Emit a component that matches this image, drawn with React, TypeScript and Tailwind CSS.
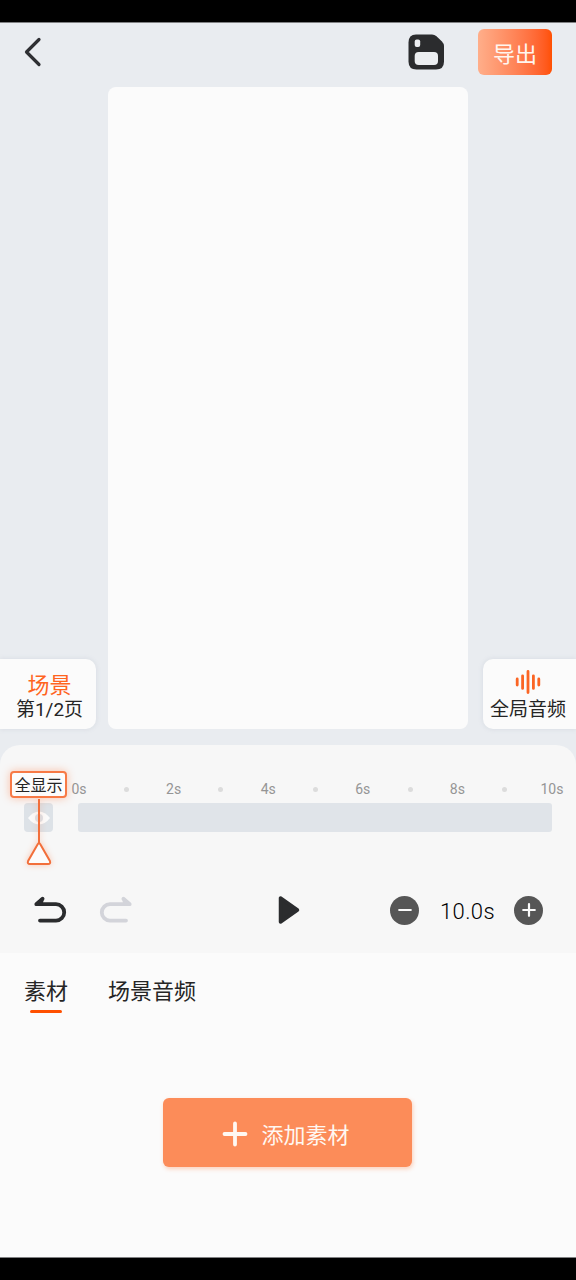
import { useState } from "react";
import clsx from "clsx";

const TABS = ["素材", "场景音频"];
const DURATION = 10;
const TICKS = Array.from({ length: DURATION + 1 }, (_, i) => i);

function BackIcon() {
  return (
    <svg width="20" height="32" viewBox="0 0 20 32" fill="none" stroke="#2e2f33" strokeWidth="3.2" strokeLinecap="round" strokeLinejoin="round">
      <path d="M17 3.5 4.5 16 17 28.5" />
    </svg>
  );
}

function SaveIcon() {
  return (
    <svg width="36" height="36" viewBox="0 0 36 36">
      <path d="M8 0.5H24Q26.5 0.5 28.5 2.3L33.7 7.2Q36 9.5 36 12V27.5Q36 35.5 28 35.5H8.5Q0.5 35.5 0.5 27.5V8.5Q0.5 0.5 8 0.5Z" fill="#2b2c2e" />
      <rect x="6.7" y="5.5" width="5.5" height="7.5" rx="2" fill="#eceef1" />
      <rect x="6.7" y="18" width="23.3" height="13" rx="4" fill="#eceef1" />
    </svg>
  );
}

function WaveIcon() {
  return (
    <svg width="26" height="24" viewBox="0 0 26 24" fill="none" stroke="#fb6524" strokeWidth="2.8" strokeLinecap="round">
      <path d="M2.2 9v6M7.6 5.8v12.6M13 1.4v21.2M18.4 5.8v12.6M23.8 9v6" />
    </svg>
  );
}

function UndoIcon({ className }: { className?: string }) {
  return (
    <svg className={className} width="34" height="28" viewBox="0 0 34 28" fill="none" stroke="currentColor" strokeWidth="3.8" strokeLinecap="round" strokeLinejoin="round">
      <path d="M7 24.6H23a8.2 8.2 0 0 0 0-16.4H3.3L9.6 2.7" />
      <path d="M3.3 8.2 9.6 2.7 8.5 8.2Z" fill="currentColor" strokeWidth="2.5" />
    </svg>
  );
}

function EyeIcon() {
  return (
    <svg width="22" height="14" viewBox="0 0 22 14">
      <path d="M0 7Q5 0.5 11 0.5T22 7Q17 13.5 11 13.5T0 7Z" fill="#fbfbfb" />
      <circle cx="11" cy="7" r="4" fill="#dde1e7" />
    </svg>
  );
}

function RoundButton({ plus, onClick }: { plus?: boolean; onClick: () => void }) {
  return (
    <button onClick={onClick} className="flex h-[29px] w-[29px] items-center justify-center rounded-full bg-[#565656]">
      <svg width="14" height="14" viewBox="0 0 14 14" stroke="#fbfbfb" strokeWidth="2.2" strokeLinecap="round">
        <path d={plus ? "M1.2 7h11.6M7 1.2v11.6" : "M1.2 7h11.6"} />
      </svg>
    </button>
  );
}

// Handle hanging from the left end of the timeline
function Playhead() {
  return (
    <div className="absolute left-[10px] top-[26px] flex w-[57px] flex-col items-center">
      <div className="flex h-[27px] w-full items-center justify-center rounded-[4px] border-2 border-[#f77a46] bg-[#fcfcfc] pt-[2px] text-[16px] leading-none whitespace-nowrap text-[#252525] shadow-[0_0_8px_rgba(255,90,20,0.35)]">
        全显示
      </div>
      <svg width="36" height="72" viewBox="0 0 36 72" fill="none" className="overflow-visible drop-shadow-[0_0_3px_rgba(255,90,20,0.3)]">
        <path d="M18 1v45" stroke="#f26f3b" strokeWidth="2" />
        <path d="M16.7 46.3Q18 44.4 19.3 46.3L28.9 63Q30 66 27 66H9Q6 66 7.1 63Z" fill="#fcfcfc" stroke="#f26f3b" strokeWidth="2" />
      </svg>
    </div>
  );
}

export default function App() {
  const [activeTab, setActiveTab] = useState(TABS[0]);
  const [seconds, setSeconds] = useState(DURATION);

  return (
    <div className="flex h-[1280px] w-[576px] flex-col overflow-hidden bg-black py-[22px] font-['Roboto','Noto_Sans_CJK_SC',sans-serif] text-[#252525]">
      <div className="flex flex-1 flex-col border-y border-[#808183] bg-[#e9ecf0]">
        {/* Header */}
        <header className="flex h-16 shrink-0 items-start pr-6 pl-[22px]">
          <button className="mt-[13px]">
            <BackIcon />
          </button>
          <button className="mt-[11px] ml-auto">
            <SaveIcon />
          </button>
          <button className="mt-[6px] ml-[34px] flex h-[46px] w-[74px] items-center justify-center rounded-[6px] bg-linear-to-r from-[#ffae8a] to-[#ff5000] pt-[5px] text-[22px] leading-none text-[#fff6ef]">
            导出
          </button>
        </header>

        {/* Canvas with the scene and audio shortcuts */}
        <main className="flex h-[642px] shrink-0 items-end justify-between">
          <button className="flex h-[70px] w-24 flex-col items-center rounded-r-[10px] bg-[#fbfbfb] pt-[15px] pl-[3px] shadow-[0_0_5px_rgba(130,140,160,0.18)]">
            <span className="text-[22px] leading-[24px] text-[#ff641f]">场景</span>
            <span className="text-[19px] leading-[24px]">第1/2页</span>
          </button>
          <div className="ml-3 h-full w-[360px] rounded-lg bg-[#fbfbfb]" />
          <button className="ml-auto flex h-[70px] w-[93px] flex-col items-center rounded-l-[10px] bg-[#fbfbfb] pt-[11px] pr-[3px] shadow-[0_0_5px_rgba(130,140,160,0.18)]">
            <WaveIcon />
            <span className="mt-[4px] text-[19px] leading-[24px] whitespace-nowrap">全局音频</span>
          </button>
        </main>

        {/* Timeline */}
        <section className="relative mt-4 flex h-[208px] shrink-0 flex-col rounded-t-[20px] bg-[#f7f7f7]">
          <div className="mt-[34px] mr-6 ml-[79px] flex h-5 items-center justify-between text-[14px] text-[#959595]">
            {TICKS.map((tick) => (
              <div key={tick} className="flex w-0 justify-center">
                {tick % 2 === 0 ? (
                  <span>{tick}s</span>
                ) : (
                  <span className="h-[5px] w-[5px] shrink-0 rounded-full bg-[#dcdcdc]" />
                )}
              </div>
            ))}
          </div>
          <div className="mt-1 flex h-[29px] pr-6 pl-6">
            <button className="flex w-[29px] items-center justify-center rounded-[4px] bg-[#dde2e7]">
              <EyeIcon />
            </button>
            <div className="ml-[25px] flex-1 rounded-[3px] bg-[#e0e4e9]" />
          </div>
          <Playhead />

          <div className="mt-[63px] flex h-[30px] items-center pr-[33px] pl-[33px]">
            <button>
              <UndoIcon className="text-[#2b2c2e]" />
            </button>
            <button className="ml-8">
              <UndoIcon className="-scale-x-100 text-[#d3d4da]" />
            </button>
            <button className="ml-[144px]">
              <svg width="23" height="30" viewBox="0 0 23 30">
                <path d="M3.5 3V27L20.5 15Z" fill="#2b2c2e" stroke="#2b2c2e" strokeWidth="3.5" strokeLinejoin="round" />
              </svg>
            </button>
            <div className="ml-auto flex items-center">
              <RoundButton onClick={() => setSeconds(Math.max(1, seconds - 1))} />
              <span className="w-[95px] pt-[3px] pl-[2px] text-center text-[22px] leading-none font-light tracking-[0.4px] text-black">{seconds.toFixed(1)}s</span>
              <RoundButton plus onClick={() => setSeconds(seconds + 1)} />
            </div>
          </div>
        </section>

        {/* Material panel */}
        <section className="flex flex-1 flex-col items-center bg-[#fbfbfb]">
          <nav className="flex w-full gap-10 pt-[23px] pl-6">
            {TABS.map((tab) => (
              <button key={tab} onClick={() => setActiveTab(tab)} className="flex flex-col items-center">
                <span className="text-[22px] leading-8">{tab}</span>
                <span className={clsx("mt-[2px] h-[3px] w-8 rounded-full", activeTab === tab && "bg-[#ff5000]")} />
              </button>
            ))}
          </nav>
          <button className="mt-[85px] mr-[2px] flex h-[69px] w-[249px] items-center justify-center rounded-[6px] bg-[#fc8c59] pt-[2px] pr-[2px] text-[22px] leading-none text-[#fff8f2] shadow-[1px_2px_4px_rgba(255,110,40,0.3)]">
            <svg width="26" height="26" viewBox="0 0 26 26" stroke="currentColor" strokeWidth="3.8" strokeLinecap="round" className="mr-[13px]">
              <path d="M2.5 13h21M13 2.5v21" />
            </svg>
            <span className="pt-[4px]">添加素材</span>
          </button>
        </section>
      </div>
    </div>
  );
}
